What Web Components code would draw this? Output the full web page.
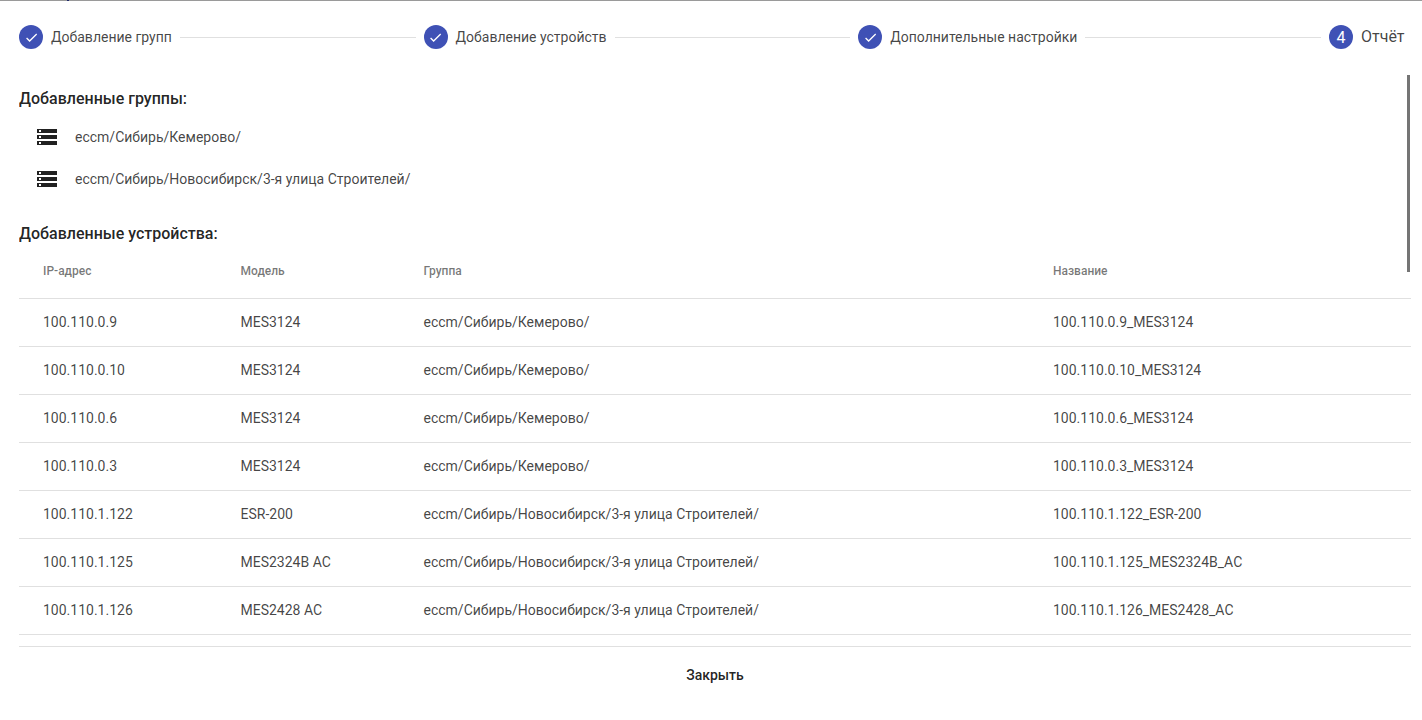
<!DOCTYPE html>
<html lang="ru">
<head>
<meta charset="utf-8">
<title>Отчёт</title>
<style>
  html, body { margin: 0; height: 100%; background: #fff; }
  body { font-family: Roboto, "Liberation Sans", sans-serif; overflow: hidden; }
</style>
</head>
<body>
<report-dialog>
  <report-stepper slot="stepper">
    <report-step done>Добавление групп</report-step>
    <report-step done>Добавление устройств</report-step>
    <report-step done>Дополнительные настройки</report-step>
    <report-step number="4" active>Отчёт</report-step>
  </report-stepper>

  <report-heading>Добавленные группы:</report-heading>
  <group-list>
    <group-item>eccm/Сибирь/Кемерово/</group-item>
    <group-item>eccm/Сибирь/Новосибирск/3-я улица Строителей/</group-item>
  </group-list>

  <report-heading second>Добавленные устройства:</report-heading>
  <device-table></device-table>

  <close-button slot="footer">Закрыть</close-button>
</report-dialog>

<script>
// Small native components for the import report dialog.

const KEMEROVO = 'eccm/Сибирь/Кемерово/';
const STROITELEY = 'eccm/Сибирь/Новосибирск/3-я улица Строителей/';

const DEVICES = [
  ['100.110.0.9', 'MES3124', KEMEROVO, '100.110.0.9_MES3124'],
  ['100.110.0.10', 'MES3124', KEMEROVO, '100.110.0.10_MES3124'],
  ['100.110.0.6', 'MES3124', KEMEROVO, '100.110.0.6_MES3124'],
  ['100.110.0.3', 'MES3124', KEMEROVO, '100.110.0.3_MES3124'],
  ['100.110.1.122', 'ESR-200', STROITELEY, '100.110.1.122_ESR-200'],
  ['100.110.1.125', 'MES2324B AC', STROITELEY, '100.110.1.125_MES2324B_AC'],
  ['100.110.1.126', 'MES2428 AC', STROITELEY, '100.110.1.126_MES2428_AC'],
];

class ReportDialog extends HTMLElement {
  constructor() {
    super();
    this.attachShadow({ mode: 'open' }).innerHTML = `
      <style>
        :host {
          display: flex;
          flex-direction: column;
          height: 720px;
          box-sizing: border-box;
          border-top: 1px solid #9a9a9a;
          padding: 0 11px 0 19px;
          color: rgba(0, 0, 0, 0.87);
          position: relative;
        }
        .mark {
          position: absolute;
          top: -1px;
          left: 67px;
          width: 2px;
          height: 1px;
          background: #1f2a6b;
        }
        .body {
          height: 573px;
          overflow: hidden;
          position: relative;
        }
        .thumb {
          position: absolute;
          top: 2px;
          right: 1px;
          width: 3px;
          height: 197px;
          background: #757575;
        }
        .foot {
          border-top: 1px solid #e0e0e0;
          display: flex;
          justify-content: center;
          padding-top: 10px;
        }
      </style>
      <span class="mark"></span>
      <slot name="stepper"></slot>
      <div class="body"><slot></slot><span class="thumb"></span></div>
      <div class="foot"><slot name="footer"></slot></div>`;
  }
}

// --- <report-stepper> / <report-step> — horizontal steps with lines ---------
class ReportStepper extends HTMLElement {
  constructor() {
    super();
    this.attachShadow({ mode: 'open' }).innerHTML = `
      <style>
        :host {
          display: flex;
          align-items: center;
          height: 72px;
          padding-right: 6.5px;
        }
      </style>
      <slot></slot>`;
  }
}

class ReportStep extends HTMLElement {
  constructor() {
    super();
    const done = this.hasAttribute('done');
    const badge = done
      ? `<svg width="15" height="15" viewBox="0 0 24 24"><path fill="#fff" d="M9 16.17 4.83 12l-1.42 1.41L9 19 21 7l-1.41-1.41z"/></svg>`
      : this.getAttribute('number');
    this.attachShadow({ mode: 'open' }).innerHTML = `
      <style>
        :host { display: flex; align-items: center; flex: 1 1 auto; }
        :host(:last-child) { flex: 0 0 auto; }
        .circle {
          width: 24px;
          height: 24px;
          border-radius: 50%;
          background: #3f51b5;
          color: #fff;
          font-size: 16px;
          display: flex;
          align-items: center;
          justify-content: center;
          flex: none;
        }
        .lbl {
          margin-left: 8px;
          font-size: 14px;
          line-height: 20px;
          color: rgba(0, 0, 0, 0.74);
          white-space: nowrap;
        }
        :host([active]) .lbl { font-size: 16px; }
        .line {
          flex: 1;
          height: 1px;
          background: #e0e0e0;
          margin: 0 8px;
        }
        :host(:last-child) .line { display: none; }
      </style>
      <span class="circle">${badge}</span>
      <span class="lbl"><slot></slot></span>
      <span class="line"></span>`;
  }
}

// --- <report-heading> -------------------------------------------------------
class ReportHeading extends HTMLElement {
  constructor() {
    super();
    this.attachShadow({ mode: 'open' }).innerHTML = `
      <style>
        :host {
          display: block;
          font-size: 16px;
          font-weight: 500;
          line-height: 20px;
          color: rgba(0, 0, 0, 0.87);
          padding-top: 16px;
        }
        :host([second]) { padding-top: 23px; }
      </style>
      <slot></slot>`;
  }
}

// --- <group-list> / <group-item> — icon + path ------------------------------
class GroupList extends HTMLElement {
  constructor() {
    super();
    this.attachShadow({ mode: 'open' }).innerHTML = `
      <style>:host { display: block; padding-top: 8px; }</style>
      <slot></slot>`;
  }
}

class GroupItem extends HTMLElement {
  constructor() {
    super();
    this.attachShadow({ mode: 'open' }).innerHTML = `
      <style>
        :host {
          display: flex;
          align-items: center;
          height: 40px;
          padding: 0 0 2px 16px;
          font-size: 14px;
          color: rgba(0, 0, 0, 0.74);
        }
        svg { width: 24px; height: 24px; margin-right: 16px; flex: none; }
      </style>
      <svg viewBox="0 0 24 24"><path fill="#212121" d="M2 20h20v-4H2v4zm2-3h2v2H4v-2zM2 4v4h20V4H2zm4 3H4V5h2v2zm-4 7h20v-4H2v4zm2-3h2v2H4v-2z"/></svg>
      <slot></slot>`;
  }
}

// --- <device-table> ---------------------------------------------------------
class DeviceTable extends HTMLElement {
  constructor() {
    super();
    const rows = DEVICES.map(
      (d) => `<div class="row">${d.map((c) => `<span>${c}</span>`).join('')}</div>`,
    ).join('');
    this.attachShadow({ mode: 'open' }).innerHTML = `
      <style>
        :host { display: block; margin-top: 4px; }
        .row {
          display: grid;
          grid-template-columns: 197.5px 183px 629.5px 1fr;
          align-items: center;
          height: 45px;
          padding: 0 0 2px 24px;
          border-bottom: 1px solid #e0e0e0;
          font-size: 14px;
          color: rgba(0, 0, 0, 0.74);
        }
        .head {
          font-size: 12px;
          font-weight: 500;
          color: rgba(0, 0, 0, 0.54);
          padding-bottom: 5px;
          box-sizing: border-box;
          height: 51px;
        }
      </style>
      <div class="row head">
        <span>IP-адрес</span><span>Модель</span><span>Группа</span><span>Название</span>
      </div>
      ${rows}`;
  }
}

// --- <close-button> ---------------------------------------------------------
class CloseButton extends HTMLElement {
  constructor() {
    super();
    this.attachShadow({ mode: 'open' }).innerHTML = `
      <style>
        :host { display: inline-block; }
        button {
          font: 500 14px/36px Roboto, "Liberation Sans", sans-serif;
          height: 36px;
          padding: 0 16px;
          border: 0;
          background: transparent;
          color: rgba(0, 0, 0, 0.87);
          cursor: pointer;
        }
      </style>
      <button type="button"><slot></slot></button>`;
  }
}

customElements.define('report-dialog', ReportDialog);
customElements.define('report-stepper', ReportStepper);
customElements.define('report-step', ReportStep);
customElements.define('report-heading', ReportHeading);
customElements.define('group-list', GroupList);
customElements.define('group-item', GroupItem);
customElements.define('device-table', DeviceTable);
customElements.define('close-button', CloseButton);
</script>
</body>
</html>
